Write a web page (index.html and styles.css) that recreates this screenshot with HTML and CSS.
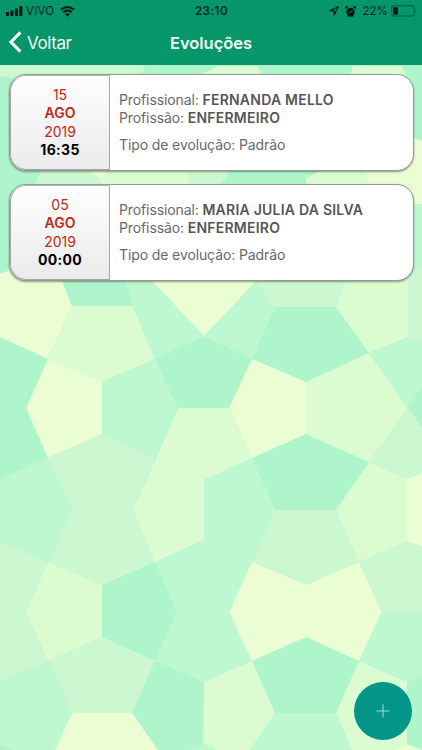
FILE: index.html
```
<!DOCTYPE html>
<html lang="pt-BR">
<head>
<meta charset="utf-8">
<meta name="viewport" content="width=device-width, initial-scale=1">
<title>Evoluções</title>
<link rel="stylesheet" href="styles.css">
</head>
<body>
<div class="app">
  <svg class="pattern" viewBox="0 0 422 750" aria-hidden="true">
    <rect class="a" width="422" height="750"/>
    <!-- upper rows -->
    <path class="c" d="M0 60H57V84L0 76ZM57 60H148L134 90H57Z"/>
    <path class="d" d="M202 74L218 66H258L268 90H230ZM345 90L353 66H402L412 90Z"/>
    <path class="c" d="M45 160L33 190H101V178L86 166Z"/>
    <path class="e" d="M82 166H112L101 179Z"/>
    <path class="d" d="M101 178L112 166H182L195 190H101Z"/>
    <path class="c" d="M182 166H232L218 190H195Z"/>
    <path class="d" d="M306 178L330 166H368L376 190H306Z"/>
    <path class="e" d="M365 166L408 135L422 141V204H372Z"/>
    <path class="b" d="M408 204H422V268L408 272Z"/>
    <!-- row behind the second card -->
    <path class="e" d="M0 274L40 258L62 281L72 306L48 359L0 337Z"/>
    <path class="d" d="M72 306H133L155 359L102 382L48 359Z"/>
    <path class="b" d="M122 270H160L204 336L155 359L133 306Z"/>
    <path class="e" d="M142 270H267L204 336Z"/>
    <path class="b" d="M267 270L204 336L252 359L275 307L256 270Z"/>
    <path class="c" d="M250 270H350L336 307H275Z"/>
    <path class="d" d="M350 270H408V337L369 353L336 307Z"/>
    <path class="c" d="M408 272L422 268V343L408 337Z"/>
    <!-- middle row -->
    <path class="e" d="M48 359L102 382V434L48 458L26 408Z"/>
    <path class="b" d="M102 382L155 359L178 408L155 458L102 434Z"/>
    <path class="c" d="M102 434L155 458L133 510L155 562L102 585L48 562L72 510L48 458Z"/>
    <path class="b" d="M0 479L48 458L72 510L48 562L0 541Z"/>
    <path class="d" d="M178 408H229L252 458L204 480V540L155 562L133 510Z"/>
    <path class="b" d="M204 480L252 458L275 510L252 562L229 612L252 661L204 682L155 661L177 612L155 562L204 540Z"/>
    <path class="e" d="M252 359L306 382V434L252 458L229 408Z"/>
    <path class="d" d="M306 382L369 353L408 408L369 462L306 434Z"/>
    <path class="c" d="M275 510H336L359 562L306 585L252 562Z"/>
    <path class="d" d="M369 462L407 479V541L359 562L336 510Z"/>
    <path class="b" d="M369 353L408 337L422 343V387L408 408Z"/>
    <path class="c" d="M408 408L422 427V473L407 479L369 462Z"/>
    <path class="e" d="M407 479L422 473V547L407 541Z"/>
    <!-- lower rows -->
    <path class="c" d="M0 541L48 562L26 612L48 661L0 682Z"/>
    <path class="d" d="M48 562L102 585V637L48 661L26 612Z"/>
    <path class="c" d="M102 637L155 661L132 713H72L48 661Z"/>
    <path class="b" d="M0 682L48 661L72 713L55 750H14L0 744Z"/>
    <path class="e" d="M72 713H132L158 750H55Z"/>
    <path class="d" d="M204 682L252 661L275 713L250 750H216L203 744Z"/>
    <path class="b" d="M203 744L216 750H190ZM275 713H336L352 750H250Z"/>
    <path class="e" d="M252 562L306 585L359 562L382 612L359 661L306 637L252 661L229 612Z"/>
    <path class="c" d="M359 562L407 541L422 547V612H382Z"/>
    <path class="b" d="M382 612H422V676L407 682L359 661Z"/>
    <path class="d" d="M359 661L407 682V744L394 750H352L336 713Z"/>
    <path class="e" d="M407 744L422 750H394Z"/>
  </svg>

  <header class="top">
    <div class="status">
      <div class="carrier">
        <svg width="17" height="10" viewBox="0 0 17 10"><rect x="0" y="6" width="3" height="4" rx=".7"/><rect x="4.4" y="4.4" width="3" height="5.6" rx=".7"/><rect x="8.9" y="2.4" width="3" height="7.6" rx=".7"/><rect x="13.3" y="0" width="3" height="10" rx=".7"/></svg>
        <span class="vivo">VIVO</span>
        <svg width="15" height="11" viewBox="0 0 15 11"><path class="wave" d="M.9 3.8Q7.5-1.8 14.1 3.8M3.2 6.3Q7.5 2.6 11.8 6.3"/><path d="M7.5 10.7L5 8.1Q7.5 6.2 10 8.1Z"/></svg>
      </div>
      <span class="clock">23:10</span>
      <div class="power">
        <svg width="10" height="10" viewBox="0 0 10 10"><path class="line" d="M9.2.8L.9 4.7H5.2V9Z"/></svg>
        <svg class="alarm" width="11" height="11" viewBox="0 0 11 11"><circle cx="5.5" cy="6" r="4.2"/><path d="M.3 3.2A2 2 0 0 1 3.4.7ZM10.7 3.2A2 2 0 0 0 7.6.7ZM2 10.6L3 8.5H8L9 10.6Z"/><path class="hands" d="M7.4 4.3L5.5 6.3H3.7"/></svg>
        <span class="percent">22%</span>
        <svg width="26" height="12" viewBox="0 0 26 12"><rect class="case" x=".6" y=".8" width="22.6" height="10.2" rx="2.2"/><rect x="2" y="2.3" width="5" height="7.2" rx=".5"/><path class="tip" d="M24.4 4Q26 5.9 24.4 7.8Z"/></svg>
      </div>
    </div>
    <nav class="bar">
      <a class="back"><svg width="13" height="22" viewBox="0 0 13 22"><path d="M11.4 1.4L2 11L11.4 20.6"/></svg><span>Voltar</span></a>
      <h1>Evoluções</h1>
    </nav>
  </header>

  <main class="list">
    <article class="card">
      <div class="date"><span>15</span><b>AGO</b><span>2019</span><b class="time">16:35</b></div>
      <div class="info">
        <p>Profissional: <b>FERNANDA MELLO</b></p>
        <p>Profissão: <b>ENFERMEIRO</b></p>
        <p class="type">Tipo de evolução: Padrão</p>
      </div>
    </article>
    <article class="card">
      <div class="date"><span>05</span><b>AGO</b><span>2019</span><b class="time">00:00</b></div>
      <div class="info">
        <p>Profissional: <b>MARIA JULIA DA SILVA</b></p>
        <p>Profissão: <b>ENFERMEIRO</b></p>
        <p class="type">Tipo de evolução: Padrão</p>
      </div>
    </article>
  </main>

  <button class="add" aria-label="Adicionar"><svg width="14" height="14" viewBox="0 0 14 14"><path d="M7 .5V13.5M.5 7H13.5"/></svg></button>
</div>
</body>
</html>
```
FILE: styles.css
```
* { box-sizing: border-box; }
body { margin: 0; font-family: Inter, "Liberation Sans", sans-serif; }
.app { position: relative; width: 422px; height: 750px; overflow: hidden; }
.pattern { position: absolute; inset: 0; width: 422px; height: 750px; }
.a { fill: #aff5cc; }
.b { fill: #bdf8d1; }
.c { fill: #ccf8d1; }
.d { fill: #dbfbd1; }
.e { fill: #eafdd3; }

.top { position: relative; height: 65px; background: #059669; }
.status { display: grid; grid-template-columns: 1fr auto 1fr; align-items: center; height: 22px; padding: 0 5px 0 6px; font-size: 11.5px; color: #06251a; }
.status svg { display: block; fill: #03150e; flex: none; }
.carrier, .power { display: flex; align-items: center; }
.vivo { margin: 0 6px 0 3px; letter-spacing: .2px; }
.clock { font-weight: 600; letter-spacing: .5px; }
.power { justify-content: flex-end; }
.alarm { margin: 0 6px 0 6px; }
.percent { margin-right: 3px; letter-spacing: .1px; }
.status .wave { fill: none; stroke: #03150e; stroke-width: 1.9; }
.status .line { fill: none; stroke: #03150e; stroke-width: 1.1; stroke-linejoin: round; }
.status .hands { fill: none; stroke: #059669; stroke-width: .9; }
.status .case { fill: none; stroke: #04583e; stroke-width: 1; }
.status .tip { fill: #04583e; }

.bar { display: grid; grid-template-columns: 1fr auto 1fr; align-items: center; height: 42px; padding: 0 9px; color: #f4fffa; }
.back { display: flex; align-items: center; gap: 5px; font-size: 17px; letter-spacing: -.4px; }
.back svg { position: relative; top: -1px; fill: none; stroke: #f4fffa; stroke-width: 3.1; }
h1 { margin: 0; font-size: 16.5px; font-weight: 600; letter-spacing: -.05px; }

.list { position: relative; display: flex; flex-direction: column; gap: 13px; padding: 9px 8px 0 9px; }
.card { display: flex; height: 97px; border: 1px solid #949a94; border-radius: 17px; background: #fff; box-shadow: 0 1px 2px rgba(60, 80, 60, .55); overflow: hidden; }
.date { display: flex; flex-direction: column; align-items: center; width: 100px; padding-top: 10px; border: 1px solid #a6a6a6; border-top-color: #b5b5b5; border-radius: 16px 0 0 16px; background: linear-gradient(#fefefe, #ebebeb); font-size: 14px; line-height: 18.3px; color: #bd2a15; }
.date b { font-weight: 600; }
.date .time { font-weight: 700; letter-spacing: .3px; color: #000; }
.info { padding: 16px 0 0 9px; font-size: 14px; line-height: 18.3px; letter-spacing: -.11px; color: #686868; white-space: nowrap; }
.info p { margin: 0; }
.info b { font-weight: 600; letter-spacing: .23px; color: #565656; }
.info .type { margin-top: 8.5px; }

.add { position: absolute; left: 354px; top: 682px; display: grid; place-items: center; width: 58px; height: 58px; padding: 0; border: 0; border-radius: 50%; background: #039588; }
.add svg { stroke: #9fd8d1; stroke-width: 1.1; }
```
